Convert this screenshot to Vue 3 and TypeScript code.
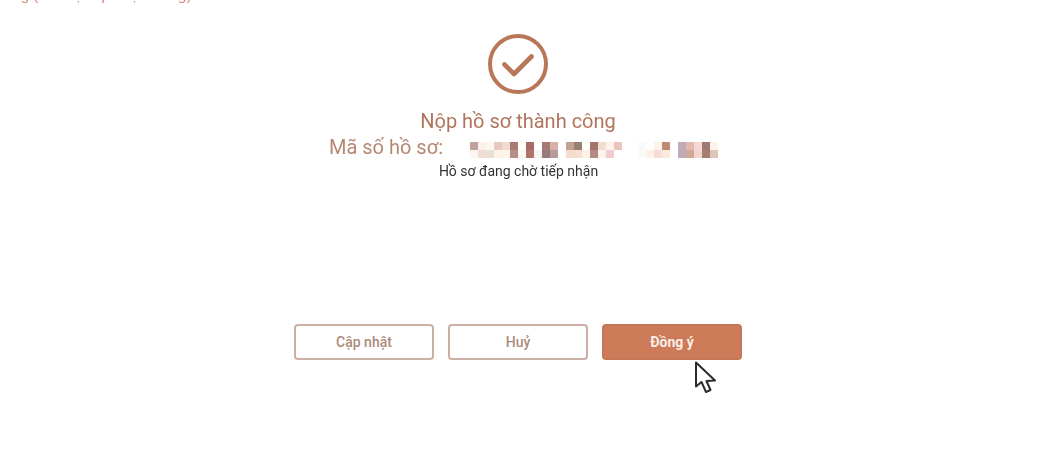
<script setup lang="ts">
const top = ['#bfa39b','#fbf1ea','#fdf8f4','#e8c9c0','#f0d9ce','#a87a72','#ffffff','#a86a64','#ffffff','#a57872','#d9b0a8','#ffffff','#c4a090','#978070','#ffffff','#a47468','#f3dcd0','#fdf3ea','#ebc4bc','#ffffff','#ffffff','#fbfafa','#ffffff','#fdf3ea','#c08a78','#ffffff','#c0acb8','#e6b8b0','#f3d8d4','#a07a70','#fdf3e8']
const bottom = ['#fdf6f0','#f3dcd6','#ebe0d8','#fdf3e7','#fdf3ea','#b78e86','#fdf7f2','#b0736c','#f9f4f4','#987c7c','#b89a9a','#ffffff','#f5dcd0','#f6dfd2','#fdf1e8','#b58a80','#fdf3ec','#f3ccd0','#ffffff','#ffffff','#ffffff','#fbfafa','#fff0e8','#f5dcd4','#fae8dc','#ffffff','#c0acb8','#cfa898','#f5d5cf','#a58070','#e0c4b8']
const cells = [...top, ...bottom]
</script>

<template>
  <main class="page">
    <div class="clip"><p class="clip-text">ng (đơn vị tiếp nhận đăng)</p></div>
    <section class="result">
      <svg class="check" width="62" height="62" viewBox="0 0 62 62" fill="none" aria-hidden="true">
        <circle cx="31" cy="31" r="28" stroke="#b9775a" stroke-width="4" />
        <path d="M17.5 31.5 L27 41 L44.5 23.5" stroke="#b9775a" stroke-width="4.6" stroke-linecap="round" stroke-linejoin="round" />
      </svg>
      <h1 class="title">Nộp hồ sơ thành công</h1>
      <div class="code-row">
        <span class="code-label">Mã số hồ sơ:</span>
        <div class="mosaic" aria-hidden="true">
          <i v-for="(c, i) in cells" :key="i" :style="{ background: c }"></i>
        </div>
      </div>
      <p class="status">Hồ sơ đang chờ tiếp nhận</p>
    </section>
    <div class="actions">
      <button class="btn" type="button">Cập nhật</button>
      <button class="btn" type="button">Huỷ</button>
      <div class="primary-wrap">
        <button class="btn primary" type="button">Đồng ý</button>
        <svg class="cursor" width="24" height="34" viewBox="0 0 24 34" aria-hidden="true">
          <path d="M2 1.5 V25.5 L7.5 21 L12 31 L16.5 29 L12.5 20 L21 19.5 Z" fill="#fff" stroke="#2c2c2c" stroke-width="2" stroke-linejoin="round" />
        </svg>
      </div>
    </div>
  </main>
</template>

<style scoped>
.page {
  width: 1042px;
  height: 459px;
  overflow: hidden;
  background: #fff;
  font-family: Roboto, "Noto Sans", sans-serif;
}
.clip {
  height: 6px;
  overflow: hidden;
  position: relative;
}
.clip-text {
  margin: -13px 0 0 12px;
  font-size: 15.5px;
  line-height: 16px;
  font-weight: 400;
  color: #cf8f7a;
  filter: blur(0.7px);
}
.result {
  display: flex;
  flex-direction: column;
  align-items: center;
  padding-top: 27px;
  padding-right: 6px;
  filter: blur(0.25px);
}
.check {
  display: block;
}
.title {
  margin: 14px 0 0;
  font-size: 20px;
  line-height: 24px;
  font-weight: 400;
  color: #b0755c;
}
.code-row {
  display: flex;
  align-items: center;
  width: 389px;
  margin: 2px 0 0 11px;
  height: 24px;
}
.code-label {
  width: 141px;
  flex: none;
  font-size: 20px;
  line-height: 24px;
  color: #b58871;
}
.mosaic {
  display: grid;
  grid-template-columns: repeat(31, 8px);
  grid-auto-rows: 8px;
  margin-top: 6px;
  filter: blur(0.4px);
}
.status {
  margin: 3px 0 0 1px;
  font-size: 14px;
  line-height: 18px;
  color: #333;
}
.actions {
  display: flex;
  justify-content: center;
  gap: 14px;
  margin-top: 144px;
  padding-right: 6px;
}
.btn {
  display: block;
  width: 140px;
  height: 36px;
  box-sizing: border-box;
  border: 2px solid #cbaea4;
  border-radius: 4px;
  background: #fff;
  color: #ac8a7c;
  font: 500 14px/20px Roboto, "Noto Sans", sans-serif;
  padding: 0;
}
.primary {
  border-color: #c47755;
  background: #cc7a58;
  color: #fbeee7;
  font-weight: 700;
}
.primary-wrap {
  position: relative;
}
.cursor {
  position: absolute;
  left: 92px;
  top: 37px;
}
</style>

<style>
html, body { margin: 0; background: #fff; }
</style>
